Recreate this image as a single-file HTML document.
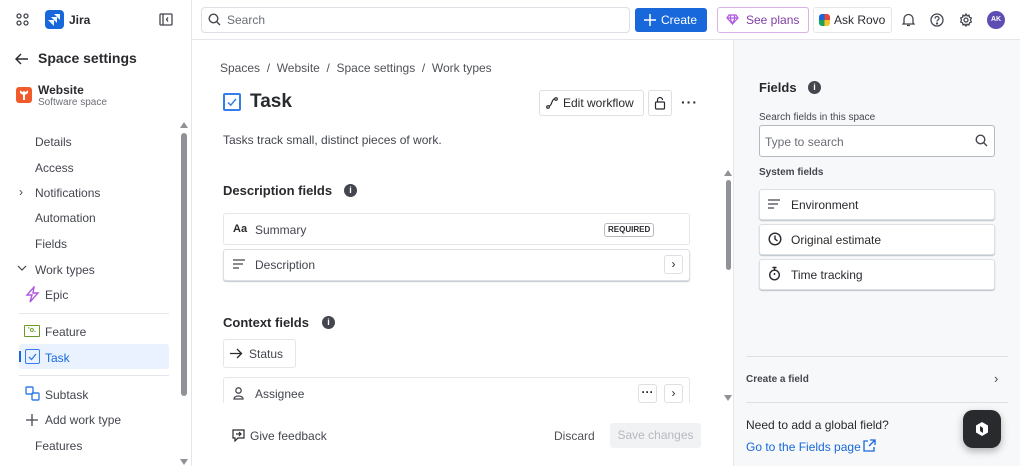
<!DOCTYPE html>
<html><head><meta charset="utf-8"><style>
*{box-sizing:border-box;margin:0;padding:0}
body{width:1020px;height:466px;overflow:hidden;background:#fff;font-family:"Liberation Sans",sans-serif;color:#292a2e;position:relative;font-size:12px}
.a{position:absolute}
.nav{position:absolute;left:35px;font-size:12px;color:#44464f}
.btn{position:absolute;border:1px solid #dcdfe4;border-radius:3px;background:#fff}
.card{position:absolute;border:1px solid #dcdfe4;border-radius:3px;background:#fff;box-shadow:0 1px 1px rgba(9,30,66,.25)}
svg{position:absolute}
</style></head><body>
<!-- sidebar -->
<div class="a" style="left:191px;top:0;width:1px;height:466px;background:#e4e6ea"></div>
<svg style="left:16px;top:13px" width="13" height="13" viewBox="0 0 13 13" fill="none" stroke="#44464f" stroke-width="1.3"><circle cx="3" cy="3" r="2"/><circle cx="10" cy="3" r="2"/><circle cx="3" cy="10" r="2"/><circle cx="10" cy="10" r="2"/></svg>
<div class="a" style="left:45px;top:10px;width:19px;height:19px;background:#1868db;border-radius:4px"></div>
<svg style="left:48px;top:13px" width="13" height="13" viewBox="0 0 13 13" fill="#fff"><path d="M6 1h6v6L9 4zM3 4h6v6L6 7zM0 7h6v6z" opacity=".95"/></svg>
<div class="a" style="left:69px;top:13px;font-size:12px;font-weight:bold">Jira</div>
<svg style="left:159px;top:13px" width="14" height="13" viewBox="0 0 14 13" fill="none" stroke="#44464f" stroke-width="1.3"><rect x="1" y="1" width="12" height="11" rx="1"/><path d="M4 1v11M9 4.5L7.5 6.5 9 8.5"/></svg>
<svg style="left:15px;top:53px" width="14" height="12" viewBox="0 0 14 12" fill="none" stroke="#292a2e" stroke-width="1.4"><path d="M13 6H2M6 1L1 6l5 5"/></svg>
<div class="a" style="left:38px;top:50px;font-size:14px;font-weight:bold">Space settings</div>
<div class="a" style="left:16px;top:87px;width:16px;height:16px;background:#f15b2b;border-radius:3px"></div>
<svg style="left:19px;top:89px" width="10" height="12" viewBox="0 0 10 12" fill="#fff"><path d="M1 1v3l3 2v5h2V6l3-2V1L7 3 5 2 3 3z"/></svg>
<div class="a" style="left:38px;top:83px;font-size:12px;font-weight:bold">Website</div>
<div class="a" style="left:38px;top:97px;font-size:10px;color:#6b6e76">Software space</div>
<div class="nav" style="top:135px">Details</div>
<div class="nav" style="top:161px">Access</div>
<div class="a" style="left:19px;top:185px;color:#44464f;font-size:12px">›</div>
<div class="nav" style="top:186px">Notifications</div>
<div class="nav" style="top:211px">Automation</div>
<div class="nav" style="top:237px">Fields</div>
<svg style="left:17px;top:265px" width="10" height="6" viewBox="0 0 10 6" fill="none" stroke="#44464f" stroke-width="1.2"><path d="M1 1l4 4 4-4"/></svg>
<div class="nav" style="top:263px">Work types</div>
<svg style="left:25px;top:286px" width="15" height="17" viewBox="0 0 15 17" fill="none" stroke="#af59e1" stroke-width="1.4"><path d="M9 1L2 9h5l-2 7 8-9H8z"/></svg>
<div class="nav" style="left:45px;top:288px">Epic</div>
<div class="a" style="left:19px;top:313px;width:150px;height:1px;background:#e4e6ea"></div>
<div class="a" style="left:24px;top:325px;width:16px;height:12px;border:1.5px solid #6a9a23;border-radius:1px;font-size:7px;color:#6a9a23;font-weight:bold;line-height:9px;text-align:center">'o.</div>
<div class="nav" style="left:45px;top:325px">Feature</div>
<div class="a" style="left:19px;top:344px;width:150px;height:25px;background:#e9f2fe;border-radius:3px"></div>
<div class="a" style="left:19px;top:351px;width:2px;height:11px;background:#1868db"></div>
<div class="a" style="left:25px;top:349px;width:15px;height:15px;border:1.5px solid #357de8;border-radius:2px"></div>
<svg style="left:28px;top:352px" width="9" height="9" viewBox="0 0 9 9" fill="none" stroke="#357de8" stroke-width="1.3"><path d="M1 5l2.5 2.5L8 2"/></svg>
<div class="nav" style="left:45px;top:351px;color:#1868db">Task</div>
<div class="a" style="left:19px;top:375px;width:150px;height:1px;background:#e4e6ea"></div>
<svg style="left:25px;top:386px" width="15" height="15" viewBox="0 0 15 15" fill="none" stroke="#357de8" stroke-width="1.4"><rect x="1" y="1" width="7" height="7" rx="1"/><rect x="7" y="7" width="7" height="7" rx="1"/></svg>
<div class="nav" style="left:45px;top:388px">Subtask</div>
<svg style="left:26px;top:414px" width="12" height="12" viewBox="0 0 12 12" stroke="#44464f" stroke-width="1.3"><path d="M6 0v12M0 6h12"/></svg>
<div class="nav" style="left:45px;top:413px">Add work type</div>
<div class="nav" style="top:439px">Features</div>
<div class="a" style="left:181px;top:133px;width:6px;height:263px;background:#909297;border-radius:3px"></div>
<svg style="left:180px;top:122px" width="8" height="6"><path d="M0 6L4 0l4 6z" fill="#909297"/></svg>
<svg style="left:180px;top:459px" width="8" height="6"><path d="M0 0l4 6 4-6z" fill="#909297"/></svg>
<!-- top bar -->
<div class="a" style="left:192px;top:39px;width:828px;height:1px;background:#e4e6ea"></div>
<div class="a" style="left:201px;top:7px;width:429px;height:26px;border:1px solid #dcdfe4;border-radius:4px"></div>
<svg style="left:208px;top:13px" width="13" height="13" viewBox="0 0 13 13" fill="none" stroke="#44464f" stroke-width="1.4"><circle cx="5.5" cy="5.5" r="4.3"/><path d="M8.5 8.5L12 12"/></svg>
<div class="a" style="left:227px;top:13px;color:#6b6e76;font-size:12px">Search</div>
<div class="a" style="left:635px;top:8px;width:72px;height:24px;background:#1868db;border-radius:3px;color:#fff;font-size:12px;line-height:24px;padding-left:26px">Create</div>
<svg style="left:644px;top:14px" width="12" height="12" stroke="#fff" stroke-width="1.5"><path d="M6 0v12M0 6h12"/></svg>
<div class="a" style="left:717px;top:7px;width:92px;height:26px;border:1px solid #d7b3ea;border-radius:3px;color:#803fa5;font-size:12px;line-height:24px;padding-left:28px">See plans</div>
<svg style="left:726px;top:14px" width="13" height="11" viewBox="0 0 13 11" fill="none" stroke="#af59e1" stroke-width="1.2"><path d="M3 1h7l2 3-5.5 6L1 4zM1 4h11M5 1L4 4l2.5 6L9 4 8 1"/></svg>
<div class="a" style="left:813px;top:7px;width:79px;height:26px;border:1px solid #e4e6ea;border-radius:3px;font-size:12px;line-height:24px;padding-left:20px">Ask Rovo</div>
<div class="a" style="left:819px;top:14px;width:11px;height:12px;border-radius:3px;background:conic-gradient(#e2483d 0 25%,#f8c22d 0 50%,#1ba25b 0 75%,#1868db 0)"></div>
<svg style="left:902px;top:13px" width="13" height="14" viewBox="0 0 13 14" fill="none" stroke="#44464f" stroke-width="1.3"><path d="M2 10V6a4.5 4.5 0 019 0v4l1 1H1zM5 12.5h3"/></svg>
<svg style="left:930px;top:13px" width="14" height="14" viewBox="0 0 14 14" fill="none" stroke="#44464f" stroke-width="1.3"><circle cx="7" cy="7" r="6"/><path d="M5 5.5a2 2 0 114 0c0 1.3-2 1.5-2 3"/><circle cx="7" cy="10.5" r=".5" fill="#44464f"/></svg>
<svg style="left:959px;top:13px" width="14" height="14" viewBox="0 0 14 14" fill="none" stroke="#44464f" stroke-width="1.3"><circle cx="7" cy="7" r="2"/><path d="M7 1l1 1.7 2-.5.5 2L12.3 5 11.5 7l.8 2-1.8.8-.5 2-2-.5L7 13l-1-1.7-2 .5-.5-2L1.7 9 2.5 7 1.7 5l1.8-.8.5-2 2 .5z"/></svg>
<div class="a" style="left:987px;top:11px;width:18px;height:18px;border-radius:50%;background:#5e4db2;color:#fff;font-size:7px;font-weight:bold;line-height:18px;text-align:center">AK</div>
<!-- main -->
<div class="a" style="left:220px;top:61px;font-size:12px;color:#505258">Spaces &nbsp;/&nbsp; Website &nbsp;/&nbsp; Space settings &nbsp;/&nbsp; Work types</div>
<div class="a" style="left:223px;top:93px;width:18px;height:18px;border:2px solid #357de8;border-radius:2px"></div>
<svg style="left:227px;top:97px" width="10" height="10" viewBox="0 0 10 10" fill="none" stroke="#357de8" stroke-width="1.5"><path d="M1 5.5l2.7 2.7L9 2"/></svg>
<div class="a" style="left:250px;top:91px;font-size:19px;font-weight:bold">Task</div>
<div class="btn" style="left:539px;top:90px;width:105px;height:26px;font-size:12px;line-height:24px;padding-left:23px">Edit workflow</div>
<svg style="left:546px;top:97px" width="12" height="12" viewBox="0 0 12 12" fill="none" stroke="#292a2e" stroke-width="1.2"><circle cx="2" cy="10" r="1.3"/><circle cx="10" cy="2" r="1.3"/><path d="M3 9c2 0 2-2 3-4s1-3 3-3"/></svg>
<div class="btn" style="left:648px;top:90px;width:24px;height:26px"></div>
<svg style="left:654px;top:96px" width="12" height="14" viewBox="0 0 12 14" fill="none" stroke="#292a2e" stroke-width="1.2"><rect x="1.5" y="6" width="9" height="7" rx="1"/><path d="M3.5 6V4a2.5 2.5 0 015 0"/></svg>
<div class="a" style="left:681px;top:94px;font-size:14px;font-weight:bold;letter-spacing:1px">···</div>
<div class="a" style="left:223px;top:133px;font-size:12px;color:#44464f">Tasks track small, distinct pieces of work.</div>
<div class="a" style="left:223px;top:183px;font-size:13px;font-weight:bold">Description fields</div>
<div class="a" style="left:344px;top:184px;width:13px;height:13px;border-radius:50%;background:#44464f;color:#fff;font-size:9px;font-weight:bold;text-align:center;line-height:13px">i</div>
<div class="a" style="left:223px;top:213px;width:467px;height:32px;border:1px solid #e4e6ea;border-radius:3px"></div>
<div class="a" style="left:233px;top:223px;font-size:11px;font-weight:bold;color:#292a2e">Aa</div>
<div class="a" style="left:255px;top:223px;font-size:12px;color:#44464f">Summary</div>
<div class="a" style="left:604px;top:223px;height:14px;border:1px solid #b7b9be;border-radius:3px;font-size:8px;font-weight:bold;padding:0 3px;line-height:12px">REQUIRED</div>
<div class="card" style="left:223px;top:249px;width:467px;height:32px"></div>
<svg style="left:233px;top:259px" width="12" height="11" stroke="#44464f" stroke-width="1.3"><path d="M0 1h12M0 5h10M0 9h6"/></svg>
<div class="a" style="left:255px;top:258px;font-size:12px;color:#44464f">Description</div>
<div class="btn" style="left:664px;top:255px;width:19px;height:19px;font-size:12px;text-align:center;line-height:16px">›</div>
<div class="a" style="left:223px;top:315px;font-size:13px;font-weight:bold">Context fields</div>
<div class="a" style="left:322px;top:316px;width:13px;height:13px;border-radius:50%;background:#44464f;color:#fff;font-size:9px;font-weight:bold;text-align:center;line-height:13px">i</div>
<div class="a" style="left:223px;top:339px;width:73px;height:29px;border:1px solid #e4e6ea;border-radius:3px"></div>
<svg style="left:230px;top:348px" width="13" height="11" fill="none" stroke="#292a2e" stroke-width="1.3"><path d="M0 5.5h12M7 1l4.5 4.5L7 10"/></svg>
<div class="a" style="left:249px;top:347px;font-size:12px;color:#44464f">Status</div>
<div class="a" style="left:223px;top:377px;width:467px;height:26px;border:1px solid #e4e6ea;border-bottom:none;border-radius:3px 3px 0 0"></div>
<svg style="left:233px;top:387px" width="11" height="13" fill="none" stroke="#44464f" stroke-width="1.3"><circle cx="5.5" cy="3.5" r="2.7"/><path d="M1 12c0-4 9-4 9 0z"/></svg>
<div class="a" style="left:255px;top:387px;font-size:12px;color:#44464f">Assignee</div>
<div class="btn" style="left:638px;top:384px;width:19px;height:19px;font-weight:bold;text-align:center;line-height:14px">···</div>
<div class="btn" style="left:664px;top:384px;width:19px;height:19px;text-align:center;line-height:16px">›</div>
<div class="a" style="left:726px;top:180px;width:5px;height:90px;background:#909297;border-radius:3px"></div>
<svg style="left:724px;top:170px" width="8" height="6"><path d="M0 6L4 0l4 6z" fill="#909297"/></svg>
<svg style="left:724px;top:395px" width="8" height="6"><path d="M0 0l4 6 4-6z" fill="#909297"/></svg>
<svg style="left:232px;top:429px" width="13" height="13" viewBox="0 0 13 13" fill="none" stroke="#292a2e" stroke-width="1.2"><path d="M1 1h11v8H6l-3 3V9H1z"/><path d="M4 5h5M7 3l2 2-2 2"/></svg>
<div class="a" style="left:250px;top:429px;font-size:12px;color:#44464f">Give feedback</div>
<div class="a" style="left:554px;top:429px;font-size:12px;color:#505258">Discard</div>
<div class="a" style="left:610px;top:423px;width:91px;height:25px;background:#f1f2f4;border-radius:3px;font-size:12px;color:#b7b9be;line-height:25px;text-align:center">Save changes</div>
<!-- right panel -->
<div class="a" style="left:733px;top:40px;width:287px;height:426px;background:#f7f8f9;border-left:1px solid #e4e6ea"></div>
<div class="a" style="left:759px;top:80px;font-size:13px;font-weight:bold">Fields</div>
<div class="a" style="left:808px;top:81px;width:13px;height:13px;border-radius:50%;background:#44464f;color:#fff;font-size:9px;font-weight:bold;text-align:center;line-height:13px">i</div>
<div class="a" style="left:759px;top:112px;font-size:10px;color:#44464f">Search fields in this space</div>
<div class="a" style="left:759px;top:125px;width:236px;height:32px;border:1px solid #b7b9be;border-radius:3px;background:#fff"></div>
<div class="a" style="left:765px;top:135px;font-size:12px;color:#6b6e76">Type to search</div>
<svg style="left:975px;top:134px" width="13" height="13" fill="none" stroke="#44464f" stroke-width="1.4"><circle cx="5.5" cy="5.5" r="4.3"/><path d="M8.5 8.5L12 12"/></svg>
<div class="a" style="left:759px;top:167px;font-size:10px;font-weight:bold;color:#44464f">System fields</div>
<div class="card" style="left:759px;top:189px;width:236px;height:31px"></div>
<svg style="left:768px;top:199px" width="12" height="11" stroke="#44464f" stroke-width="1.3"><path d="M0 1h12M0 5h10M0 9h6"/></svg>
<div class="a" style="left:791px;top:198px;font-size:12px;color:#292a2e">Environment</div>
<div class="card" style="left:759px;top:224px;width:236px;height:31px"></div>
<svg style="left:768px;top:232px" width="14" height="14" fill="none" stroke="#292a2e" stroke-width="1.4"><circle cx="7" cy="7" r="5.8"/><path d="M7 3.5V7l2.5 2"/></svg>
<div class="a" style="left:791px;top:233px;font-size:12px;color:#292a2e">Original estimate</div>
<div class="card" style="left:759px;top:259px;width:236px;height:31px"></div>
<svg style="left:768px;top:266px" width="13" height="15" fill="none" stroke="#292a2e" stroke-width="1.4"><circle cx="6.5" cy="9" r="4.8"/><path d="M4.5 1.5h4M6.5 1.5v2.5M6.5 9V7"/></svg>
<div class="a" style="left:791px;top:268px;font-size:12px;color:#292a2e">Time tracking</div>
<div class="a" style="left:746px;top:356px;width:262px;height:1px;background:#dcdfe4"></div>
<div class="a" style="left:746px;top:374px;font-size:10px;font-weight:bold;color:#44464f">Create a field</div>
<div class="a" style="left:994px;top:371px;font-size:13px;color:#44464f">›</div>
<div class="a" style="left:746px;top:402px;width:262px;height:1px;background:#dcdfe4"></div>
<div class="a" style="left:746px;top:418px;font-size:12px;color:#292a2e">Need to add a global field?</div>
<div class="a" style="left:746px;top:440px;font-size:12px;color:#1868db">Go to the Fields page</div>
<svg style="left:863px;top:439px" width="13" height="13" fill="none" stroke="#1868db" stroke-width="1.3"><path d="M5 2H1v10h10V8M7 1h5v5M12 1L6 7"/></svg>
<div class="a" style="left:963px;top:410px;width:38px;height:38px;border-radius:10px;background:#292a2e;box-shadow:0 3px 8px rgba(0,0,0,.3)"></div>
<svg style="left:974px;top:421px" width="16" height="16" viewBox="0 0 16 16"><path d="M8 1l6 3.5v7L8 15 2 11.5v-7z" fill="#fff"/><path d="M6 5l3 2v5L6 10z" fill="#292a2e"/></svg>
</body></html>
